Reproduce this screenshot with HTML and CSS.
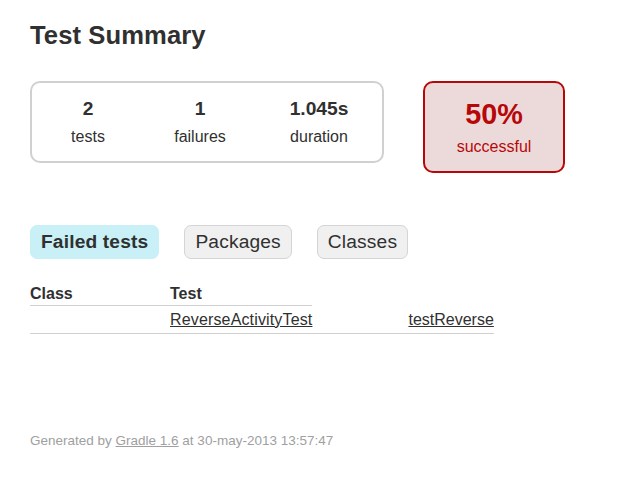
FILE: index.html
```html
<!DOCTYPE html>
<html>
<head>
<meta charset="utf-8">
<title>Test results - Test Summary</title>
<link rel="stylesheet" href="styles.css">
</head>
<body>
<div class="content">
  <h1 class="title">Test Summary</h1>
  <div class="summary">
    <div class="summary-group">
      <div class="info-box info-tests">
        <div class="counter">2</div>
        <p class="label">tests</p>
      </div>
      <div class="info-box info-failures">
        <div class="counter">1</div>
        <p class="label">failures</p>
      </div>
      <div class="info-box info-duration">
        <div class="counter">1.045s</div>
        <p class="label">duration</p>
      </div>
    </div>
    <div class="success-rate failures">
      <div class="percent">50%</div>
      <p class="label">successful</p>
    </div>
  </div>
  <ul class="tab-links">
    <li class="tab selected"><a href="#tab0">Failed tests</a></li>
    <li class="tab"><a href="#tab1">Packages</a></li>
    <li class="tab"><a href="#tab2">Classes</a></li>
  </ul>
  <table class="failed-table">
    <thead>
      <tr>
        <th class="col-class">Class</th>
        <th class="col-test">Test</th>
      </tr>
    </thead>
    <tbody>
      <tr>
        <td class="col-class"></td>
        <td class="col-test"><a href="#">ReverseActivityTest</a></td>
        <td class="col-method"><a href="#">testReverse</a></td>
      </tr>
    </tbody>
  </table>
  <div class="footer">Generated by <a href="#">Gradle 1.6</a> at 30-may-2013 13:57:47</div>
</div>
</body>
</html>
```
FILE: styles.css
```css
html, body {
  margin: 0;
  padding: 0;
  background: #ffffff;
}
body {
  font-family: "Liberation Sans", Arial, sans-serif;
  font-size: 16px;
  color: #303030;
}
a, a:visited {
  color: #303030;
}
.content {
  padding: 20px 30px 30px 30px;
}
.title {
  margin: 0;
  font-size: 25.6px;
  line-height: 30px;
  font-weight: bold;
  letter-spacing: 0.1px;
}
.summary {
  margin-top: 31px;
  display: flex;
  align-items: flex-start;
}
.summary-group {
  display: flex;
  border: 2px solid #d0d0d0;
  border-radius: 10px;
}
.info-box {
  width: 112px;
  padding: 15px 0;
  text-align: center;
}
.info-duration {
  width: 126px;
}
.counter {
  font-size: 19.2px;
  line-height: 22px;
  font-weight: bold;
  margin-bottom: 8px;
}
.label {
  margin: 0;
  line-height: 18px;
}
.success-rate {
  margin-left: 39px;
  width: 138px;
  padding: 15px 0;
  text-align: center;
  border: 2px solid #b60808;
  border-radius: 10px;
  background: #ecdada;
  color: #b60808;
}
.percent {
  font-size: 28.8px;
  line-height: 32px;
  font-weight: bold;
  margin-bottom: 8px;
}
.tab-links {
  list-style: none;
  margin: 52px 0 0 0;
  padding: 0;
  display: flex;
  gap: 25px;
}
.tab {
  padding: 5px 10px;
  border: 1px solid #d4d4d4;
  border-radius: 7px;
  background: #f0f0f0;
  font-size: 19.2px;
  line-height: 22px;
  letter-spacing: 0.15px;
}
.tab a {
  text-decoration: none;
  color: #303030;
}
.tab.selected {
  background: #c8f0f6;
  border-color: #c8f0f6;
}
.tab.selected a {
  font-weight: bold;
}
.failed-table {
  margin-top: 22px;
  border-spacing: 0;
  line-height: 18px;
}
.failed-table th {
  text-align: left;
  font-weight: bold;
  padding: 4px 0 2px 0;
  border-bottom: 1px solid #d0d0d0;
}
.failed-table td {
  padding: 5px 0 4px 0;
  border-bottom: 1px solid #d0d0d0;
}
.col-class {
  width: 140px;
}
.col-test a {
  letter-spacing: 0.15px;
}
.failed-table td.col-method {
  padding-left: 96px;
}
.footer {
  margin-top: 99px;
  font-size: 13.5px;
  line-height: 16px;
  color: #a0a0a0;
  white-space: nowrap;
}
.footer a, .footer a:visited {
  color: #a0a0a0;
}
```
